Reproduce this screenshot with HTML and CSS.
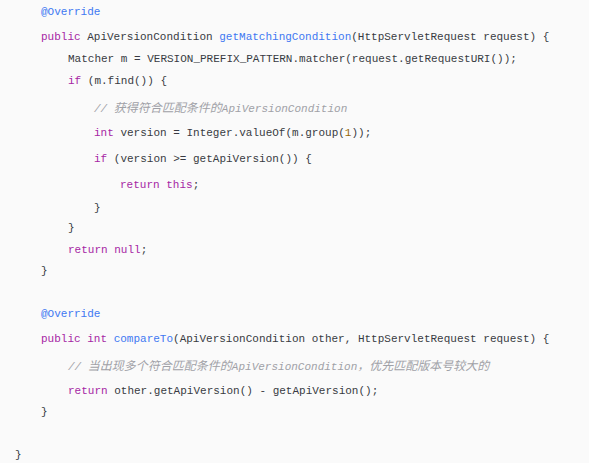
FILE: index.html
```html
<!DOCTYPE html>
<html>
<head>
<meta charset="utf-8">
<link rel="stylesheet" href="styles.css">
</head>
<body>
<div class="code">
<div class="ln i1"><span class="fn">@Override</span></div>
<div class="ln i1 m3"><span class="kw">public</span> ApiVersionCondition <span class="fn">getMatchingCondition</span>(HttpServletRequest request) {</div>
<div class="ln i2">Matcher m = VERSION_PREFIX_PATTERN.matcher(request.getRequestURI());</div>
<div class="ln i2"><span class="kw">if</span> (m.find()) {</div>
<div class="ln i3 m4"><span class="cm">// <span class="cjk">获得符合匹配条件的</span>ApiVersionCondition</span></div>
<div class="ln i3 m4"><span class="kw">int</span> version = Integer.valueOf(m.group(<span class="num">1</span>));</div>
<div class="ln i3 m4"><span class="kw">if</span> (version &gt;= getApiVersion()) {</div>
<div class="ln i4 m4"><span class="kw">return</span> <span class="kw">this</span>;</div>
<div class="ln i3 m1">}</div>
<div class="ln i2 mn2">}</div>
<div class="ln i2"><span class="kw">return</span> <span class="kw">null</span>;</div>
<div class="ln i1 mn1">}</div>
<div class="blank"></div>
<div class="ln i1"><span class="fn">@Override</span></div>
<div class="ln i1 m3"><span class="kw">public</span> <span class="kw">int</span> <span class="fn">compareTo</span>(ApiVersionCondition other, HttpServletRequest request) {</div>
<div class="ln i2 m4"><span class="cm">// <span class="cjk">当出现多个符合匹配条件的</span>ApiVersionCondition<span class="cjk">，优先匹配版本号较大的</span></span></div>
<div class="ln i2 m4"><span class="kw">return</span> other.getApiVersion() - getApiVersion();</div>
<div class="ln i1 mn1">}</div>
<div class="blank"></div>
<div class="ln i0">}</div>
</div>
</body>
</html>
```

FILE: styles.css
```css
html, body {
  margin: 0;
  padding: 0;
  background: #fafafa;
}

.code {
  padding: 1px 0 0 15px;
  font-family: "Liberation Mono", "Noto Sans CJK SC", monospace;
  font-size: 11px;
  color: #383a42;
}

.ln {
  height: 22px;
  line-height: 22px;
  white-space: pre;
}

.i0 { padding-left: 0; }
.i1 { padding-left: 26px; }
.i2 { padding-left: 53px; }
.i3 { padding-left: 79px; }
.i4 { padding-left: 105px; }

.m1 { margin-top: 1px; }
.m3 { margin-top: 3px; }
.m4 { margin-top: 4px; }
.mn1 { margin-top: -1px; }
.mn2 { margin-top: -2px; }

.blank { height: 21px; }

.kw { color: #a626a4; }
.fn { color: #4078f2; }
.num { color: #986801; }
.cm { color: #a0a1a7; font-style: italic; }
.cjk { font-family: "Noto Sans CJK SC", sans-serif; font-size: 12px; }
```
